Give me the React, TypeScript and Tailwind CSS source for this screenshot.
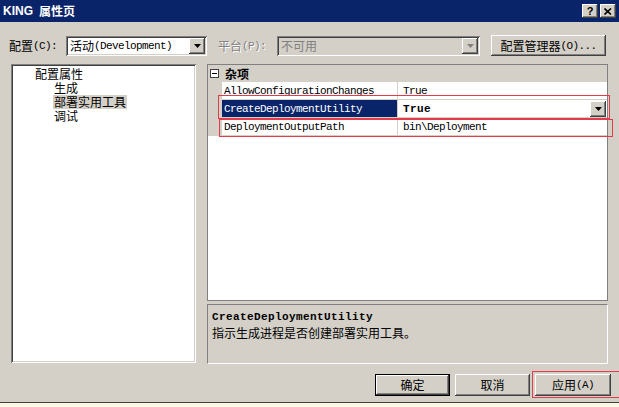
import React from "react";

const CJK = "font-['Noto_Sans_CJK_SC',sans-serif] text-[12px] leading-[14px]";
const MONO = "font-['Liberation_Mono','Noto_Sans_CJK_SC',monospace] text-[11px] tracking-[-0.6px] leading-[14px]";
const MONOB = "font-['Liberation_Mono','Noto_Sans_CJK_SC',monospace] text-[11px] font-bold tracking-[0.4px] leading-[14px]";
const RAISED =
  "shadow-[inset_-1px_-1px_#404040,inset_1px_1px_#ffffff,inset_-2px_-2px_#808080,inset_2px_2px_#d4d0c8]";
const SUNKEN =
  "shadow-[inset_1px_1px_#808080,inset_-1px_-1px_#ffffff,inset_2px_2px_#404040,inset_-2px_-2px_#d4d0c8]";

function Arrow({ color = "#000000" }: { color?: string }) {
  return (
    <svg width="7" height="4" viewBox="0 0 7 4">
      <polygon points="0,0 7,0 3.5,4" fill={color} />
    </svg>
  );
}

function DropBtn({ disabled = false }: { disabled?: boolean }) {
  return (
    <div className={`ml-auto w-[16px] h-[16px] bg-[#d4d0c8] flex items-center justify-center shrink-0 ${RAISED}`}>
      <Arrow color={disabled ? "#808080" : "#000000"} />
    </div>
  );
}

function Btn({ children, w, def = false }: { children: React.ReactNode; w: string; def?: boolean }) {
  return (
    <div
      className={`${w} h-[22px] bg-[#d4d0c8] flex items-center justify-center text-black ${
        def ? "border border-black" : ""
      } ${RAISED}`}
    >
      {children}
    </div>
  );
}

export default function App() {
  return (
    <div className="relative w-[619px] h-[407px] bg-[#d4d0c8] overflow-hidden flex flex-col select-none text-black">
      {/* Title bar */}
      <div className="h-[22px] shrink-0 bg-[#0a246a] flex items-center pl-[3px] pr-[3px]">
        <span className="font-['Liberation_Sans',sans-serif] text-[12px] font-bold text-white leading-[14px]">KING</span>
        <span className="ml-[6px] font-['Noto_Sans_CJK_SC',sans-serif] text-[12px] font-bold text-white leading-[14px]">
          属性页
        </span>
        <div className="ml-auto flex gap-[2px]">
          <div className={`w-[16px] h-[14px] bg-[#d4d0c8] flex items-center justify-center ${RAISED}`}>
            <span className="font-['Liberation_Sans',sans-serif] text-[11px] font-bold leading-[11px]">?</span>
          </div>
          <div className={`w-[16px] h-[14px] bg-[#d4d0c8] flex items-center justify-center ${RAISED}`}>
            <svg width="8" height="7" viewBox="0 0 8 7">
              <path d="M0.5 0.5 L7 6.5 M7 0.5 L0.5 6.5" stroke="#000" strokeWidth="1.6" />
            </svg>
          </div>
        </div>
      </div>

      {/* Toolbar */}
      <div className="mt-[13px] h-[21px] shrink-0 flex items-center">
        <div className="w-[66px] pl-[9px] flex items-center">
          <span className={CJK}>配置</span>
          <span className={MONO}>(C):</span>
        </div>
        <div className={`w-[141px] h-[20px] bg-white flex items-center pl-[4px] pr-[2px] ${SUNKEN}`}>
          <span className={CJK}>活动</span>
          <span className={MONO}>(Development)</span>
          <DropBtn />
        </div>
        <div className="w-[70px] pl-[11px] flex items-center text-[#808080] [text-shadow:1px_1px_#ffffff]">
          <span className={CJK}>平台</span>
          <span className={MONO}>(P):</span>
        </div>
        <div className={`w-[203px] h-[20px] bg-[#d4d0c8] flex items-center pl-[4px] pr-[2px] ${SUNKEN}`}>
          <span className={`${CJK} text-[#808080]`}>不可用</span>
          <DropBtn disabled />
        </div>
        <div className={`ml-[11px] w-[115px] h-[21px] bg-[#d4d0c8] flex items-center justify-center ${RAISED}`}>
          <span className={CJK}>配置管理器</span>
          <span className={MONO}>(O)...</span>
        </div>
      </div>

      {/* Main */}
      <div className="mt-[8px] h-[300px] shrink-0 flex pl-[11px]">
        {/* Tree */}
        <div className={`w-[185px] h-[299px] bg-white pt-[3px] flex flex-col ${SUNKEN}`}>
          <div className="h-[14px] flex items-center pl-[24px]">
            <span className={CJK}>配置属性</span>
          </div>
          <div className="h-[14px] flex items-center pl-[43px]">
            <span className={CJK}>生成</span>
          </div>
          <div className="h-[14px] flex items-center pl-[42px]">
            <span className={`${CJK} bg-[#d4d0c8] px-[1px]`}>部署实用工具</span>
          </div>
          <div className="h-[14px] flex items-center pl-[43px]">
            <span className={CJK}>调试</span>
          </div>
        </div>

        {/* Right column */}
        <div className="ml-[11px] w-[401px] flex flex-col">
          <div className="h-[237px] border border-[#808080] bg-white flex flex-col">
            {/* category */}
            <div className="h-[17px] bg-[#d4d0c8] flex items-center pl-[2px]">
              <svg width="9" height="9" viewBox="0 0 9 9">
                <rect x="0.5" y="0.5" width="8" height="8" fill="#ffffff" stroke="#404040" />
                <line x1="2" y1="4.5" x2="7" y2="4.5" stroke="#000" />
              </svg>
              <span className={`${CJK} font-bold ml-[6px]`}>杂项</span>
            </div>
            {/* rows */}
            <div className="h-[18px] flex border-b border-[#d4d0c8]">
              <div className="w-[14px] bg-[#d4d0c8]" />
              <div className="w-[176px] pl-[2px] flex items-center border-r border-[#d4d0c8]">
                <span className={MONO}>AllowConfigurationChanges</span>
              </div>
              <div className="flex-1 pl-[5px] flex items-center">
                <span className={MONO}>True</span>
              </div>
            </div>
            <div className="h-[18px] flex border-b border-[#d4d0c8]">
              <div className="w-[14px] bg-[#d4d0c8]" />
              <div className="w-[176px] pl-[2px] flex items-center bg-[#0a246a] text-white border-r border-[#d4d0c8]">
                <span className={MONO}>CreateDeploymentUtility</span>
              </div>
              <div className="flex-1 pl-[5px] pr-[1px] flex items-center">
                <span className={MONOB}>True</span>
                <DropBtn />
              </div>
            </div>
            <div className="h-[18px] flex border-b border-[#d4d0c8]">
              <div className="w-[14px] bg-[#d4d0c8]" />
              <div className="w-[176px] pl-[2px] flex items-center border-r border-[#d4d0c8]">
                <span className={MONO}>DeploymentOutputPath</span>
              </div>
              <div className="flex-1 pl-[5px] flex items-center">
                <span className={MONO}>bin\Deployment</span>
              </div>
            </div>
          </div>
          {/* description */}
          <div className="mt-[3px] h-[60px] border-t border-l border-[#808080] border-b border-r border-b-white border-r-white pl-[4px] pt-[5px] flex flex-col">
            <span className={MONOB}>CreateDeploymentUtility</span>
            <span className={`${CJK} mt-[2px]`}>指示生成进程是否创建部署实用工具。</span>
          </div>
        </div>
      </div>

      {/* Buttons */}
      <div className="mt-[10px] h-[22px] shrink-0 flex justify-end gap-[5px] pr-[8px]">
        <Btn w="w-[75px]" def>
          <span className={CJK}>确定</span>
        </Btn>
        <Btn w="w-[75px]">
          <span className={CJK}>取消</span>
        </Btn>
        <Btn w="w-[76px]">
          <span className={CJK}>应用</span>
          <span className={MONO}>(A)</span>
        </Btn>
      </div>

      <div className="mt-auto h-[5px] shrink-0 border-t border-[#404040] bg-[#fbf8e6]" />

      {/* Red annotation rectangles */}
      <div className="absolute left-[218px] top-[95px] w-[392px] h-[24px] border border-[#e23c4c]" />
      <div className="absolute left-[219px] top-[119px] w-[394px] h-[18px] border border-[#e23c4c]" />
      <div className="absolute left-[532px] top-[371px] w-[90px] h-[27px] border border-[#e23c4c]" />
    </div>
  );
}
